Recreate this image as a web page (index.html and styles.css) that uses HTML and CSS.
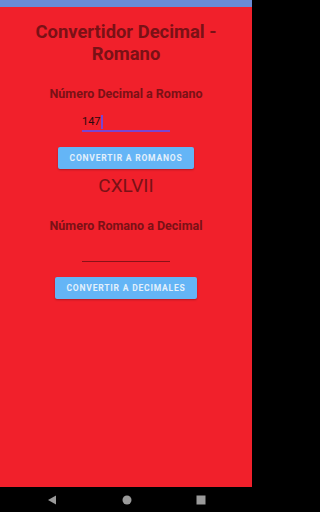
FILE: index.html
```html
<!DOCTYPE html>
<html lang="es">
<head>
<meta charset="utf-8">
<title>Convertidor Decimal - Romano</title>
<link rel="stylesheet" href="styles.css">
</head>
<body>
<div class="screen">
  <div class="status-bar"></div>
  <main class="content">
    <h1 class="title">Convertidor Decimal - Romano</h1>
    <h2 class="subtitle sub-first">Número Decimal a Romano</h2>
    <div class="field field-active">
      <span class="field-text">147</span><span class="caret"></span>
    </div>
    <button class="btn btn-romanos">Convertir a romanos</button>
    <div class="result">CXLVII</div>
    <h2 class="subtitle sub-second">Número Romano a Decimal</h2>
    <div class="field field-idle"></div>
    <button class="btn btn-decimales">Convertir a decimales</button>
  </main>
  <nav class="nav-bar">
    <svg class="nav-icon" width="10" height="10" viewBox="0 0 10 10"><polygon points="9,0.5 9,9.5 1,5" fill="#9a9a9a"/></svg>
    <svg class="nav-icon" width="10" height="10" viewBox="0 0 10 10"><circle cx="5" cy="5" r="4.5" fill="#9a9a9a"/></svg>
    <svg class="nav-icon" width="10" height="10" viewBox="0 0 10 10"><rect x="0.5" y="0.5" width="9" height="9" fill="#9a9a9a"/></svg>
  </nav>
</div>
</body>
</html>
```
FILE: styles.css
```css
html, body {
  margin: 0;
  padding: 0;
}
body {
  font-family: Roboto, "Liberation Sans", sans-serif;
  background: #000;
}
.screen {
  width: 252px;
  height: 512px;
  display: flex;
  flex-direction: column;
  overflow: hidden;
}
.status-bar {
  height: 7px;
  background: #6a8bd6;
  flex: none;
}
.content {
  flex: 1;
  background: #f1202b;
  display: flex;
  flex-direction: column;
  align-items: center;
  padding-top: 14px;
  color: #7a1116;
}
.title {
  margin: 0;
  font-size: 18.4px;
  line-height: 22px;
  font-weight: 700;
  text-align: center;
  width: 200px;
}
.subtitle {
  margin: 0;
  font-size: 12.5px;
  line-height: 15px;
  font-weight: 700;
  text-align: center;
}
.sub-first {
  margin-top: 21px;
}
.field {
  width: 88px;
  box-sizing: border-box;
  display: flex;
  align-items: flex-end;
}
.field-active {
  margin-top: 11px;
  height: 20px;
  border-bottom: 2px solid #7a45d0;
  padding-bottom: 1px;
}
.field-text {
  font-size: 11px;
  line-height: 14px;
  color: #2a0a0c;
}
.caret {
  width: 2px;
  height: 14px;
  background: #7a45d0;
  margin-left: 0.5px;
}
.btn {
  border: none;
  border-radius: 2px;
  background: #64b5f6;
  color: #e3f0fb;
  font-family: Roboto, "Liberation Sans", sans-serif;
  font-size: 8.5px;
  font-weight: 700;
  letter-spacing: 0.8px;
  text-transform: uppercase;
  height: 22px;
  padding: 0;
  box-shadow: 0 1px 2px rgba(0,0,0,0.25);
}
.btn-romanos {
  margin-top: 15px;
  width: 136px;
}
.result {
  margin-top: 6px;
  font-size: 19px;
  line-height: 22px;
  color: #7a1116;
}
.sub-second {
  margin-top: 21px;
}
.field-idle {
  margin-top: 14px;
  height: 15px;
  border-bottom: 1px solid #8a1218;
}
.btn-decimales {
  margin-top: 15px;
  width: 142px;
}
.nav-bar {
  height: 25px;
  flex: none;
  background: #000;
  display: flex;
  align-items: center;
  justify-content: space-between;
  padding: 0 46px 0 47px;
}
.nav-icon {
  display: block;
}
```
